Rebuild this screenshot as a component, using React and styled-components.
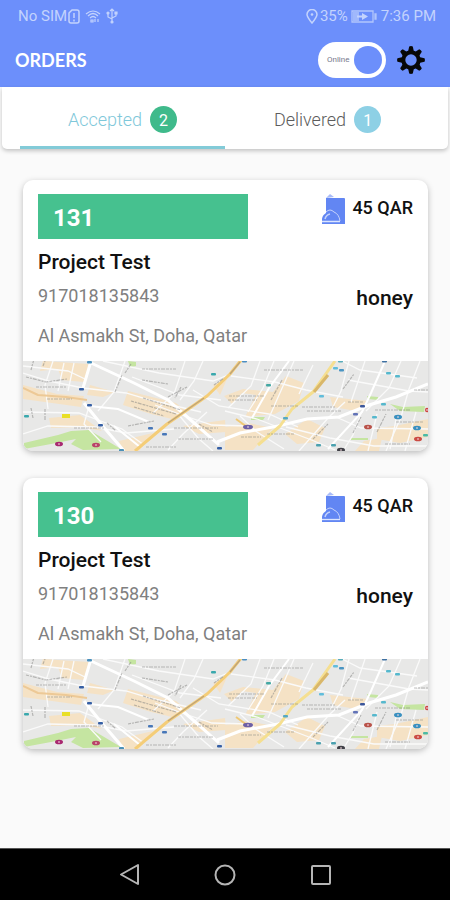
import React, { useState } from "react";
import styled, { createGlobalStyle } from "styled-components";

const GlobalStyle = createGlobalStyle`
  * { box-sizing: border-box; }
  body { margin: 0; background: #fafafa; font-family: Roboto, sans-serif; }
  button { border: 0; padding: 0; background: none; font: inherit; color: inherit; cursor: pointer; }
  svg { display: block; flex: none; }
`;

const Screen = styled.div`
  display: flex;
  flex-direction: column;
  min-height: 100vh;
`;

const Header = styled.header`
  background: #6c8ffb;
  color: #ffffff;
`;

const StatusBar = styled.div`
  display: flex;
  justify-content: space-between;
  height: 32px;
  padding: 0 14px 0 18px;
  font-size: 15px;
  line-height: 32px;
  color: #c3d3fd;
`;

const StatusGroup = styled.div`
  display: flex;
  align-items: center;
  gap: ${(p) => p.$gap}px;
`;

const AppBar = styled.div`
  display: flex;
  align-items: center;
  height: 55px;
  padding: 0 25px 0 15px;
`;

const AppTitle = styled.h1`
  flex: 1;
  margin: 0;
  font: 700 18px/24px Lato, sans-serif;
`;

const Switch = styled.label`
  display: flex;
  align-items: center;
  justify-content: space-between;
  width: 68px;
  height: 36px;
  margin-right: 11px;
  padding: 0 4px 4px 9px;
  padding-bottom: 0;
  border-radius: 18px;
  background: #ffffff;
  color: #77788c;
  font-size: 8px;
  cursor: pointer;
`;

const SwitchInput = styled.input`
  appearance: none;
  flex: none;
  width: 28px;
  height: 28px;
  margin: 0;
  border-radius: 50%;
  background: #b9bdc9;
  cursor: pointer;
  &:checked { background: #6c8ffb; }
`;

const Tabs = styled.div`
  display: flex;
  height: 62px;
  margin: 0 2px;
  padding: 0 18px;
  border-radius: 0 0 5px 5px;
  background: #ffffff;
  box-shadow: 0 2px 4px rgba(0, 0, 0, 0.22);
`;

const Tab = styled.button`
  flex: 1;
  display: flex;
  align-items: center;
  justify-content: center;
  gap: 8px;
  && {
    border-bottom: 3px solid ${(p) => (p.$active ? "#83cbd8" : "transparent")};
    padding-top: 5px;
    font-size: 18px;
    font-weight: 300;
    color: ${(p) => (p.$active ? "#7fc8da" : "#5c5c5c")};
  }
`;

const Badge = styled.span`
  width: 27px;
  height: 27px;
  border-radius: 50%;
  background: ${(p) => p.$color};
  color: #ffffff;
  font-size: 16px;
  font-weight: 400;
  line-height: 29px;
  text-align: center;
`;

const OrderList = styled.main`
  flex: 1;
  display: flex;
  flex-direction: column;
  gap: 27px;
  padding: 31px 22px 27px 23px;
`;

const Card = styled.article`
  overflow: hidden;
  border-radius: 10px;
  background: #ffffff;
  box-shadow: 0 2px 6px rgba(0, 0, 0, 0.25);
`;

const Details = styled.div`
  display: grid;
  grid-template-columns: 56% 1fr;
  padding: 14px 15px 0;
`;

const OrderNumber = styled.div`
  height: 45px;
  padding-left: 15px;
  background: #46c18f;
  color: #ffffff;
  font-size: 24px;
  font-weight: 700;
  line-height: 49px;
`;

const Price = styled.div`
  display: flex;
  align-items: flex-start;
  justify-content: flex-end;
  gap: 7px;
  color: #111111;
  font-size: 18px;
  font-weight: 500;
  line-height: 27px;
`;

const Customer = styled.h2`
  grid-column: 1 / -1;
  margin: 0;
  color: #111111;
  font-size: 21px;
  font-weight: 500;
  line-height: 46px;
`;

const Line = styled.div`
  color: #808080;
  font-size: 18px;
  line-height: ${(p) => p.$height}px;
  white-space: nowrap;
`;

const Restaurant = styled.div`
  color: #111111;
  font-size: 21px;
  font-weight: 500;
  line-height: 26px;
  text-align: right;
`;

const MapCanvas = styled.svg`
  width: 100%;
  height: 90px;
  background: #e8e8e7;
`;

const NavBar = styled.nav`
  display: flex;
  align-items: center;
  justify-content: center;
  gap: 72px;
  height: 52px;
  border-top: 1px solid #555555;
  background: #000000;
  color: #b5b5b5;
`;

function SimIcon() {
  return (
    <svg width="12" height="15" viewBox="0 0 12 15" fill="none" stroke="currentColor">
      <path d="M1 4L4 1h5q2 0 2 2v9q0 2-2 2H3q-2 0-2-2z" strokeWidth="1.500" />
      <path d="M6 4v5M6 10.500v2" strokeWidth="1.500" />
    </svg>
  );
}

function WifiIcon() {
  return (
    <svg width="16" height="15" viewBox="0 0 16 15" fill="none" stroke="currentColor" strokeWidth="1.200">
      <path d="M1 5Q8-1 15 5M3 7Q8 2 13 7M5 9Q8 6 11 9M6 11h2v2H6zM10 10v3M13 10v3" />
    </svg>
  );
}

function UsbIcon() {
  return (
    <svg width="12" height="16" viewBox="0 0 12 16" fill="none" stroke="currentColor" strokeWidth="1.200">
      <path d="M6 1v13M4 3l2-2 2 2M2 5v4l4 2M10 5v3L6 10" />
      <circle cx="6" cy="14" r="1" fill="currentColor" />
      <circle cx="2" cy="5" r="1" fill="currentColor" />
      <path d="M9 4h2v2H9z" fill="currentColor" />
    </svg>
  );
}

function PinIcon() {
  return (
    <svg width="12" height="15" viewBox="0 0 12 15" fill="none" stroke="currentColor" strokeWidth="1.500">
      <path d="M6 14Q1 8 1 5.500a5 5 0 0 1 10 0Q11 8 6 14z" />
      <circle cx="6" cy="5.500" r="1.300" fill="currentColor" stroke="none" />
    </svg>
  );
}

function BatteryIcon() {
  return (
    <svg width="27" height="13" viewBox="0 0 27 13" fill="none" stroke="currentColor">
      <path d="M1 1h21v11H1zM24 4h1v5h-1z" strokeWidth="1.300" opacity=".8" />
      <path d="M2 2h6v9H2z" fill="currentColor" stroke="none" opacity=".6" />
      <path d="M6 5.500h5V3l6 3.500-6 3.500V7.500H6z" fill="currentColor" stroke="none" />
    </svg>
  );
}

function GearIcon() {
  return (
    <svg width="28" height="28" viewBox="-14 -14 28 28">
      <g fill="#080808">
        {[0, 45, 90, 135, 180, 225, 270, 315].map((angle) => (
          <path key={angle} transform={`rotate(${angle})`} d="M-3-8L-1.800-13.500q1.800-.8 3.600 0L3-8z" />
        ))}
      </g>
      <circle r="7.700" fill="none" stroke="#080808" strokeWidth="4" />
    </svg>
  );
}

function MealIcon() {
  return (
    <svg width="23" height="31" viewBox="0 0 23 31">
      <path d="M4 4h18q1 0 1 1v25H4z" fill="#6286f3" />
      <path d="M4 4L8 0l4 3" fill="#a9bcf8" />
      <path d="M0 27a8 8 0 0 1 7-9q0-2 1.500-2t1.500 2a8 8 0 0 1 7 9z" fill="#6286f3" />
      <path d="M4 18q4-4 8 0 5 2 6 9" fill="none" stroke="#c5d2fb" />
      <path d="M3 25q1-4 5-5" fill="none" stroke="#c5d2fb" strokeWidth="1.500" />
      <path d="M0 28h18v2H0z" fill="#6286f3" />
      <path d="M0 27.500h18" stroke="#dce5ff" strokeWidth="1.300" />
    </svg>
  );
}

const blocks = [
  "M20 0L66 3 61 21 39 19 35 8 17 10z", "M0 24L34 33 61 35 58 46 0 38z",
  "M105 30L153 42 163 50 149 58 128 53 100 44z", "M26 57L57 54 79 70 60 66 28 67z",
  "M67 24L92 31 80 36 64 34z", "M160 65L202 59 203 71 176 73z",
  "M96 80L130 72 116 90 100 90z", "M263 15L281 22 276 40 252 53 222 56 233 34 219 32 209 43 201 35 220 28 250 31z",
  "M202 66L225 62 250 67 230 89 202 89z", "M284 58L302 67 296 81 274 83 262 73z",
  "M307 36L345 40 333 50 310 46z", "M354 67L372 65 405 58V76L377 82 354 78z",
  "M190 24L204 18 197 34z", "M341 80L359 77 356 90H332z"
];

const minorRoads = [
  "M0 12L26 20 60 27 103 32 127 39 178 51", "M30 0L22 24 25 48", "M0 51L56 52 99 68 121 84",
  "M0 73L25 65 72 66 103 72 151 68", "M102 0L91 31 75 50", "M80 0L136 12 190 20 205 14",
  "M162 0L151 33 130 52", "M180 0L171 20 157 39", "M109 16L157 34 198 39", "M132 44L156 53 189 64 224 65",
  "M170 29L196 45 246 53 275 66", "M0 5L45 10 62 18", "M41 2L35 30M51 2L45 30",
  "M208 15L252 21 283 29 320 36", "M237 0L228 25 205 47", "M251 0L240 27 225 51",
  "M271 0L260 25 245 59M290 4L276 33", "M319 0L337 9 394 17", "M325 19L386 30 405 31",
  "M326 0L318 30 308 50", "M342 0L328 41M378 0L366 27 343 50", "M397 0L386 28 378 56 363 90",
  "M202 50L234 58 291 80 312 89", "M217 55L234 71 261 88", "M263 66L307 77 351 85 405 85",
  "M276 90L306 56 322 41", "M313 56L338 67 405 68", "M339 50L330 74 320 90", "M354 53L345 90",
  "M374 54L367 88M393 51L382 90", "M155 53L176 78 190 90", "M184 51L160 73 145 89", "M66 45L61 63 78 81"
];

const greens = [
  "M1 82L35 74 48 70 66 69 98 88 60 89 48 83 53 78 28 83 1 88z",
  "M367 43L380 46 402 45 401 51 377 50z", "M105 0l8 1 0 4-6 1z", "M228 56h14l-2 3h-12z",
  "M328 77h17v2h-17z", "M344 35l11 1 0 3-10-1z"
];

const labels = [
  "M3 16L23 21 44 18M13 26h31M24 38h25M119 8h34M119 19l26 4", "M108 40l45 13M111 46l30 9M120 37l38 12",
  "M51 67h31M151 67h44M155 78h36M123 86h31", "M206 35h36M205 39h29M241 9h39M248 45h28",
  "M279 46h33M284 50h34M325 41h15M352 49h35", "M218 76h20M244 73h28M362 83h25M373 61h27M391 29h14",
  "M158 26l-6 11M92 31l7-17M84 62l9 8M105 65l26-5", "M8 9l3-11M20 5l4-10M102 12l6-9M191 24l10-7",
  "M248 39l11-20M320 28l11-15M330 72l8-16M354 71l9-18M290 78l15-15", "M145 36l19-10M176 63l14 8M8 47l2 10M22 48v12"
];

const markers = [
  [66, 1, "#4a90bd"], [58, 28, "#355fa5"], [66, 44, "#355fa5"], [77, 64, "#355fa5"],
  [127, 67, "#4777b8"], [141, 73, "#4777b8"], [190, 13, "#39a8ad"], [3, 55, "#39a8ad"],
  [98, 89, "#4c91b8"], [196, 87, "#355fa5"], [221, 0, "#4b8ec2"], [245, 24, "#44a8a4"],
  [312, 7, "#61bddb"], [318, 9, "#4a95c3"], [298, 35, "#61bddb"], [361, 0, "#3e70a1"],
  [365, 12, "#56b8cd"], [374, 15, "#56b8cd"], [332, 53, "#6273b7"], [339, 45, "#3c579b"],
  [360, 43, "#56b8cd"], [351, 56, "#56b8cd"], [262, 57, "#55a9c3"], [295, 84, "#4ba1af"],
  [310, 84, "#4ba1af"], [402, 74, "#4abaa5"], [317, 0, "#58acba"]
];

const places = [
  [36, 83, 4, "#a82870"], [73, 84, 4, "#b94468"], [225, 66, 5, "#6d60a6"],
  [345, 66, 4, "#b95249"], [375, 56, 4, "#3990c0"], [394, 67, 4, "#3990c0"],
  [395, 78, 4, "#cb4b43"], [318, 89, 4, "#404047"], [404, 49, 2, "#cc4342"]
];

function StreetMap() {
  return (
    <MapCanvas viewBox="0 0 405 90" preserveAspectRatio="xMidYMid slice" role="img" aria-label="Delivery map">
      <rect width="405" height="90" fill="#e8e8e7" />
      {blocks.map((d) => <path key={d} d={d} fill="#f5e2c5" />)}
      {greens.map((d) => <path key={d} d={d} fill="#c5e5a1" />)}
      <g fill="none" stroke="#fafafa" strokeWidth="1.300">
        {minorRoads.map((d) => <path key={d} d={d} />)}
      </g>
      <g fill="none" stroke="#ffffff" strokeWidth="3">
        <path d="M68 0L60 27M61 42L78 63 101 90M68 2L111 22 145 39 170 61 196 84" />
        <path d="M66 45L95 48 126 61M91 65L117 86" strokeWidth="2" />
        <path d="M194 81L217 72 255 65 284 58 316 56 346 44 373 36 405 23" />
        <path d="M266 0L246 27 229 57M362 0L348 32 339 51 305 88" strokeWidth="2" />
      </g>
      <g fill="none" strokeLinejoin="round">
        <path d="M0 27L15 34 43 36 64 39" stroke="#edc996" strokeWidth="2" />
        <path d="M112 90L144 63 184 35 207 13 219-2" stroke="#f4cd79" strokeWidth="3" />
        <path d="M145 62L181 37M207 13L217 1" stroke="#bda37a" strokeWidth="1.300" />
        <path d="M312 0L290 31 269 48 257 65 235 84" stroke="#f5df91" strokeWidth="3" />
        <path d="M305 14L291 31" stroke="#d9b76a" strokeWidth="3" />
        <path d="M213 58L224 66" stroke="#efc875" strokeWidth="2" />
      </g>
      <g fill="none" stroke="#808080" strokeWidth="1.200" strokeDasharray="3 1 2 1 4 1" opacity=".5">
        {labels.map((d) => <path key={d} d={d} />)}
      </g>
      <path d="M39 53h8v4h-8z" fill="#e9df26" />
      {markers.map(([x, y, color]) => (
        <rect key={`${x}-${y}`} x={x - 2} y={y - 1} width="5" height="2.500" rx="1" fill={color} />
      ))}
      {places.map(([x, y, size, color]) => (
        <g key={`${x}-${y}`}>
          <ellipse cx={x} cy={y} rx={size} ry="2.300" fill={color} />
          <path d={`M${x - 1} ${y}h2`} stroke="#f5d9df" />
        </g>
      ))}
    </MapCanvas>
  );
}

function OrderCard({ number }) {
  return (
    <Card>
      <Details>
        <OrderNumber>{number}</OrderNumber>
        <Price><MealIcon />45 QAR</Price>
        <Customer>Project Test</Customer>
        <Line $height={22}>917018135843</Line>
        <Restaurant>honey</Restaurant>
        <Line $height={50}>Al Asmakh St, Doha, Qatar</Line>
      </Details>
      <StreetMap />
    </Card>
  );
}

export default function App() {
  const [tab, setTab] = useState("accepted");
  return (
    <Screen>
      <GlobalStyle />
      <Header>
        <StatusBar>
          <StatusGroup $gap={5}>
            <StatusGroup $gap={1}>No SIM<SimIcon /></StatusGroup>
            <WifiIcon />
            <UsbIcon />
          </StatusGroup>
          <StatusGroup $gap={3}>
            <StatusGroup $gap={2}><PinIcon />35%</StatusGroup>
            <BatteryIcon />
            7:36 PM
          </StatusGroup>
        </StatusBar>
        <AppBar>
          <AppTitle>ORDERS</AppTitle>
          <Switch>
            Online
            <SwitchInput type="checkbox" role="switch" defaultChecked />
          </Switch>
          <button type="button" aria-label="Settings"><GearIcon /></button>
        </AppBar>
      </Header>
      <Tabs role="tablist">
        <Tab type="button" role="tab" aria-selected={tab === "accepted"} $active={tab === "accepted"} onClick={() => setTab("accepted")}>
          Accepted <Badge $color="#3fba8b">2</Badge>
        </Tab>
        <Tab type="button" role="tab" aria-selected={tab === "delivered"} $active={tab === "delivered"} onClick={() => setTab("delivered")}>
          Delivered <Badge $color="#8dd0e5">1</Badge>
        </Tab>
      </Tabs>
      <OrderList>
        <OrderCard number="131" />
        <OrderCard number="130" />
      </OrderList>
      <NavBar aria-label="System navigation">
        <button type="button" aria-label="Back">
          <svg width="24" height="24" fill="none" stroke="currentColor" strokeWidth="2" strokeLinejoin="round"><path d="M21 2v19L4 11.500z" /></svg>
        </button>
        <button type="button" aria-label="Home">
          <svg width="24" height="24" fill="none" stroke="currentColor" strokeWidth="2"><circle cx="12" cy="12" r="9.500" /></svg>
        </button>
        <button type="button" aria-label="Recent apps">
          <svg width="24" height="24" fill="none" stroke="currentColor" strokeWidth="2"><rect x="3" y="3" width="18" height="18" rx="1" /></svg>
        </button>
      </NavBar>
    </Screen>
  );
}
